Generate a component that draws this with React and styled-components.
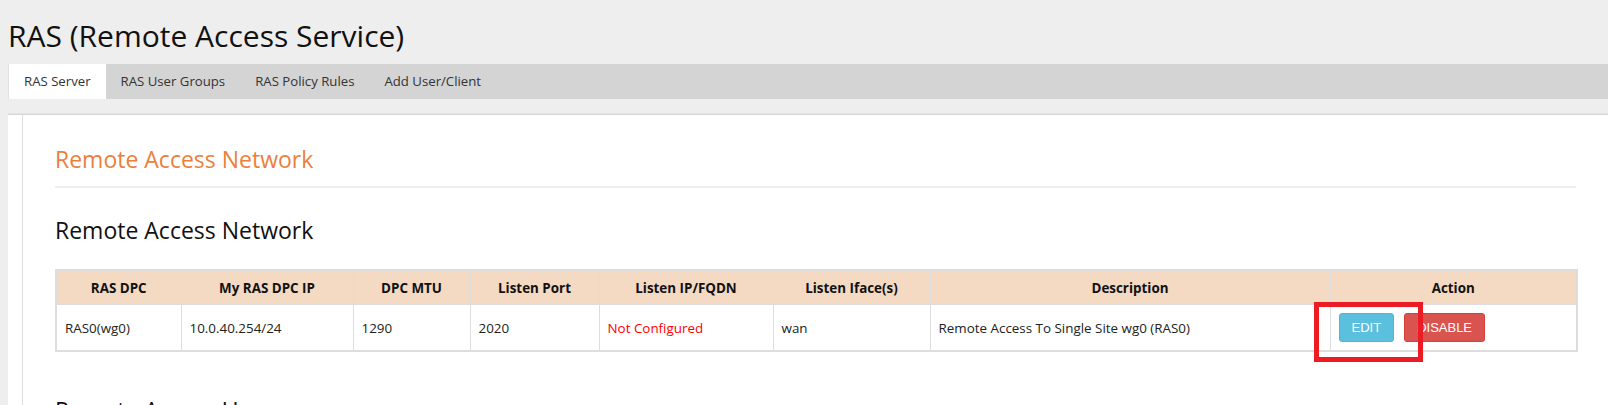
import React from 'react';
import styled, { createGlobalStyle } from 'styled-components';

const Global = createGlobalStyle`
  html, body { margin: 0; padding: 0; background: #eeeeee; }
  body {
    font-family: "Open Sans", "Noto Sans", sans-serif;
    color: #222;
    overflow: hidden;
  }
`;

const Page = styled.div`
  padding-left: 8px;
  height: 405px;
  overflow: hidden;
`;

const Title = styled.h1`
  margin: 0;
  padding-top: 16px;
  font-size: 30px;
  line-height: 40px;
  font-weight: 400;
  color: #111;
`;

const TabBar = styled.nav`
  margin-top: 8px;
  height: 35px;
  display: flex;
  background: #d4d4d4;
  border-left: 1px solid #e2e2e2;
`;

const Tab = styled.div`
  padding: 0 15px;
  line-height: 35px;
  font-size: 13.2px;
  color: #333;
  background: ${p => (p.$active ? '#ffffff' : 'transparent')};
  white-space: nowrap;
`;

const Panel = styled.section`
  margin-top: 15px;
  background: #fff;
  border-top: 1px solid #d6d6d6;
  box-shadow: 0 -1px 0 #e4e4e4;
  padding-left: 14px;
`;

const Inner = styled.div`
  border-left: 1px solid #dddddd;
  padding: 29px 32px 0 32px;
  min-height: 300px;
`;

const SectionTitle = styled.h2`
  margin: 0;
  font-size: 23px;
  line-height: 30px;
  font-weight: 400;
  color: ${p => p.$color || '#111'};
  margin-top: ${p => p.$mt || 0}px;
`;

const Rule = styled.hr`
  margin: 12px 0 0 0;
  border: 0;
  border-top: 2px solid #eeeeee;
`;

const TableWrap = styled.div`
  position: relative;
  margin-top: 24px;
`;

const Table = styled.table`
  width: 1521px;
  border-collapse: collapse;
  table-layout: fixed;
  border: 2px solid #dddddd;
  font-size: 13.4px;
`;

const Th = styled.th`
  background: #f4d9c3;
  border: 1px solid #dddddd;
  height: 33px;
  padding: 0 8px;
  font-weight: 700;
  color: #111;
  text-align: center;
`;

const Td = styled.td`
  border: 1px solid #dddddd;
  height: 45px;
  padding: 0 8px;
  color: ${p => p.$color || '#222'};
  white-space: nowrap;
`;

const Actions = styled.div`
  display: flex;
  gap: 10px;
`;

const Button = styled.button`
  height: 29px;
  padding: 0 12px;
  font-family: "Liberation Sans", Arial, sans-serif;
  font-size: 13px;
  text-transform: uppercase;
  color: #fff;
  border-radius: 3px;
  border: 1px solid ${p => (p.$kind === 'danger' ? '#d43f3a' : '#46b8da')};
  background: ${p => (p.$kind === 'danger' ? '#d9534f' : '#5bc0de')};
  cursor: pointer;
`;

const Highlight = styled.div`
  position: absolute;
  left: 1259px;
  top: 33px;
  width: 109px;
  height: 60px;
  box-sizing: border-box;
  border: 5px solid #ed1c24;
  pointer-events: none;
`;

const columns = [
  { label: 'RAS DPC', w: 125 },
  { label: 'My RAS DPC IP', w: 172 },
  { label: 'DPC MTU', w: 117 },
  { label: 'Listen Port', w: 129 },
  { label: 'Listen IP/FQDN', w: 174 },
  { label: 'Listen Iface(s)', w: 157 },
  { label: 'Description', w: 400 },
  { label: 'Action', w: 247 },
];

export default function App() {
  return (
    <>
      <Global />
      <Page>
        <Title>RAS (Remote Access Service)</Title>
        <TabBar>
          <Tab $active>RAS Server</Tab>
          <Tab>RAS User Groups</Tab>
          <Tab>RAS Policy Rules</Tab>
          <Tab>Add User/Client</Tab>
        </TabBar>
        <Panel>
          <Inner>
            <SectionTitle $color="#ec7f3b">Remote Access Network</SectionTitle>
            <Rule />
            <SectionTitle $mt={27}>Remote Access Network</SectionTitle>
            <TableWrap>
              <Table>
                <colgroup>
                  {columns.map(c => (
                    <col key={c.label} style={{ width: c.w }} />
                  ))}
                </colgroup>
                <thead>
                  <tr>
                    {columns.map(c => (
                      <Th key={c.label}>{c.label}</Th>
                    ))}
                  </tr>
                </thead>
                <tbody>
                  <tr>
                    <Td>RAS0(wg0)</Td>
                    <Td>10.0.40.254/24</Td>
                    <Td>1290</Td>
                    <Td>2020</Td>
                    <Td $color="#ff0000">Not Configured</Td>
                    <Td>wan</Td>
                    <Td>Remote Access To Single Site wg0 (RAS0)</Td>
                    <Td>
                      <Actions>
                        <Button>Edit</Button>
                        <Button $kind="danger">Disable</Button>
                      </Actions>
                    </Td>
                  </tr>
                </tbody>
              </Table>
              <Highlight />
            </TableWrap>
            <SectionTitle $mt={43}>Remote Access Users</SectionTitle>
          </Inner>
        </Panel>
      </Page>
    </>
  );
}
